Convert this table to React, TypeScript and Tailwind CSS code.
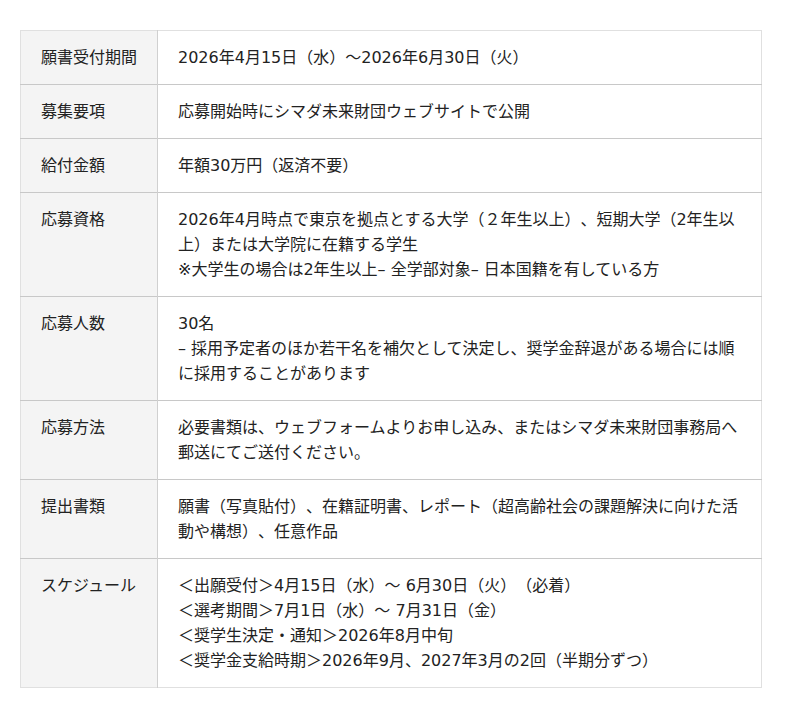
const rows: { label: string; lines: string[] }[] = [
  { label: "願書受付期間", lines: ["2026年4月15日（水）〜2026年6月30日（火）"] },
  { label: "募集要項", lines: ["応募開始時にシマダ未来財団ウェブサイトで公開"] },
  { label: "給付金額", lines: ["年額30万円（返済不要）"] },
  {
    label: "応募資格",
    lines: [
      "2026年4月時点で東京を拠点とする大学（２年生以上）、短期大学（2年生以上）または大学院に在籍する学生",
      "※大学生の場合は2年生以上– 全学部対象– 日本国籍を有している方",
    ],
  },
  {
    label: "応募人数",
    lines: [
      "30名",
      "– 採用予定者のほか若干名を補欠として決定し、奨学金辞退がある場合には順に採用することがあります",
    ],
  },
  {
    label: "応募方法",
    lines: [
      "必要書類は、ウェブフォームよりお申し込み、またはシマダ未来財団事務局へ郵送にてご送付ください。",
    ],
  },
  {
    label: "提出書類",
    lines: [
      "願書（写真貼付）、在籍証明書、レポート（超高齢社会の課題解決に向けた活動や構想）、任意作品",
    ],
  },
  {
    label: "スケジュール",
    lines: [
      "＜出願受付＞4月15日（水）〜 6月30日（火）（必着）",
      "＜選考期間＞7月1日（水）〜 7月31日（金）",
      "＜奨学生決定・通知＞2026年8月中旬",
      "＜奨学金支給時期＞2026年9月、2027年3月の2回（半期分ずつ）",
    ],
  },
];

export default function App() {
  return (
    <div
      className="bg-white w-[800px] h-[718px] pt-[30px] pl-[20px] [text-spacing-trim:space-all]"
      style={{ fontFamily: '"DejaVu Sans", "Noto Sans CJK JP", sans-serif' }}
    >
      <table className="w-[742px] border-collapse border border-[#e0e0e0] text-[16px] leading-[25px] text-[#222]">
        <tbody>
          {rows.map((r) => (
            <tr key={r.label} className="border-b border-[#c8c8c8] last:border-b-[#e0e0e0]">
              <th className="w-[137px] bg-[#f4f4f4] border-r border-[#d0d0d0] px-5 py-[14px] text-left align-top font-normal">
                {r.label}
              </th>
              <td className="px-5 py-[14px] align-top">
                {r.lines.map((l, i) => (
                  <div key={i}>{l}</div>
                ))}
              </td>
            </tr>
          ))}
        </tbody>
      </table>
    </div>
  );
}
